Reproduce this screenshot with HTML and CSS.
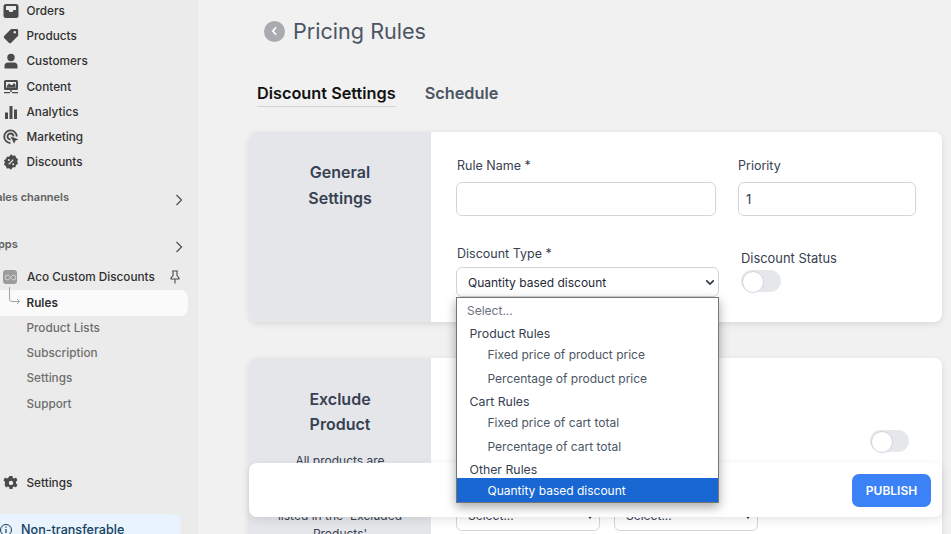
FILE: index.html
```html
<!DOCTYPE html>
<html lang="en">
<head>
<meta charset="utf-8">
<title>Pricing Rules</title>
<link rel="stylesheet" href="styles.css">
</head>
<body>
<div class="app">
  <aside class="sidebar">
    <nav class="nav-main">
      <a class="nav-item"><svg class="ico" viewBox="0 0 16 16"><path fill="#4a4a4a" d="M3 1h10a2.500 2.500 0 0 1 2.500 2.500v9A2.500 2.500 0 0 1 13 15H3a2.500 2.500 0 0 1-2.500-2.500v-9A2.500 2.500 0 0 1 3 1Z"/><path fill="#ebebeb" d="M3.500 3h9a.5.5 0 0 1 .5.500V7h-2.500l-1 2h-3l-1-2H3V3.500a.5.5 0 0 1 .5-.5Z"/></svg>Orders</a>
      <a class="nav-item"><svg class="ico" viewBox="0 0 16 16"><path fill="#4a4a4a" d="M9 1h5a1.200 1.200 0 0 1 1.200 1.200V7a1.800 1.800 0 0 1-.5 1.200l-6.500 6.500a1.700 1.700 0 0 1-2.400 0l-4.500-4.500a1.700 1.700 0 0 1 0-2.400l6.500-6.500A1.800 1.800 0 0 1 9 1Z"/><circle cx="11.800" cy="4.300" r="1.200" fill="#ebebeb"/></svg>Products</a>
      <a class="nav-item"><svg class="ico" viewBox="0 0 16 16"><circle cx="8" cy="4.500" r="3.700" fill="#4a4a4a"/><path fill="#4a4a4a" d="M1.500 15.500v-2.500A3.500 3.500 0 0 1 5 9.500h6a3.500 3.500 0 0 1 3.500 3.500v2.500Z"/></svg>Customers</a>
      <a class="nav-item"><svg class="ico" viewBox="0 0 16 16"><rect x="1" y="1" width="14" height="10" rx="1.500" fill="#4a4a4a"/><path fill="#ebebeb" d="M3 3h10v5.500H3Z"/><path fill="#4a4a4a" d="M4 6.500L6 4.500l2 1.500h1.500L11 4l1.500 1.500V8.500H4Z"/><path fill="#4a4a4a" d="M7.300 11h1.400v2h-1.400ZM1 13h6v1.300H1ZM9 13h6v1.300H9Z"/></svg>Content</a>
      <a class="nav-item"><svg class="ico" viewBox="0 0 16 16"><path fill="#4a4a4a" d="M2 8.500h3V15H2ZM6.500 2h3v13h-3ZM11 5.500h3V15h-3Z"/></svg>Analytics</a>
      <a class="nav-item"><svg class="ico" viewBox="0 0 16 16"><path fill="none" stroke="#4a4a4a" stroke-width="1.800" d="M7.500 14A6.300 6.300 0 1 1 13.800 7.500"/><path fill="none" stroke="#4a4a4a" stroke-width="1.800" d="M7.500 10.500a3 3 0 1 1 3-3"/><path fill="#4a4a4a" d="M7.500 7.500l8 2.700-3 1.300-1.300 3.200Z"/></svg>Marketing</a>
      <a class="nav-item"><svg class="ico" viewBox="0 0 16 16"><path fill="#4a4a4a" d="M8 .3l1.900 1.400 2.400-.1.700 2.200 2 1.400-.8 2.300.8 2.200-2 1.400-.7 2.200-2.400-.1L8 15.700l-1.900-1.400-2.400.1-.7-2.200-2-1.400.8-2.200-.8-2.300 2-1.400.7-2.200 2.400.1Z"/><path stroke="#ebebeb" stroke-width="1.300" d="M10.300 5.600l-4.600 4.800"/><circle cx="5.800" cy="6" r="1" fill="#ebebeb"/><circle cx="10.200" cy="10.200" r="1" fill="#ebebeb"/></svg>Discounts</a>
    </nav>
    <div class="section-head first"><span>Sales channels</span><svg class="chev" viewBox="0 0 8 12"><path d="M1.500 1l5 5-5 5" fill="none" stroke="#4d4d4d" stroke-width="1.200"/></svg></div>
    <div class="section-head second"><span>Apps</span><svg class="chev" viewBox="0 0 8 12"><path d="M1.500 1l5 5-5 5" fill="none" stroke="#4d4d4d" stroke-width="1.200"/></svg></div>
    <div class="app-row">
      <span class="app-logo"><svg viewBox="0 0 14 8" width="11" height="7"><path fill="none" stroke="#e8e8e8" stroke-width="1" d="M7 4C5.500 2 4.500 1 3.200 1a3 3 0 0 0 0 6C4.500 7 5.500 6 7 4c1.500-2 2.500-3 3.800-3a3 3 0 0 1 0 6C9.500 7 8.500 6 7 4Z"/></svg></span>
      <span class="app-name">Aco Custom Discounts</span>
      <svg class="pin" viewBox="0 0 12 14"><path fill="none" stroke="#4a4a4a" stroke-width="1.100" d="M3.200 1h5.600M4 1v4.500L2 8v1h8V8L8 5.500V1M6 9v4.500"/></svg>
    </div>
    <div class="subnav">
      <svg class="elbow" viewBox="0 0 14 22"><path fill="none" stroke="#a3a3a3" d="M1.500 0v12a2.500 2.500 0 0 0 2.500 2.500h7.500M9 12l2.500 2.500L9 17"/></svg>
      <a class="sub-item active">Rules</a>
      <a class="sub-item">Product Lists</a>
      <a class="sub-item">Subscription</a>
      <a class="sub-item">Settings</a>
      <a class="sub-item">Support</a>
    </div>
    <a class="nav-item settings"><svg class="ico" viewBox="0 0 16 16"><path fill="#4a4a4a" fill-rule="evenodd" d="M6.500 1h3l.4 2 1.300.6 1.800-1 1.500 2.600-1.500 1.400v1.800l1.500 1.300-1.500 2.700-1.800-1-1.300.6-.4 2h-3l-.4-2-1.300-.6-1.800 1-1.500-2.700L2 8.700V6.900L.5 5.200 2 2.600l1.800 1 1.300-.6ZM8 5.700a2.200 2.200 0 1 0 0 4.400A2.200 2.200 0 0 0 8 5.700Z"/></svg>Settings</a>
    <div class="notice"><svg class="info" viewBox="0 0 14 14"><circle cx="6" cy="7" r="5.500" fill="none" stroke="#16405f" stroke-width="1"/><path stroke="#16405f" stroke-width="1.200" d="M6 6v4M6 3.500v1.300"/></svg><span>Non-transferable</span></div>
  </aside>

  <main class="main">
    <header class="page-head">
      <span class="back"><svg viewBox="0 0 8 12" width="7" height="10"><path d="M6 1.500L2 6l4 4.500" fill="none" stroke="#fff" stroke-width="2"/></svg></span>
      <h1>Pricing Rules</h1>
    </header>
    <div class="tabs">
      <span class="tab active">Discount Settings</span>
      <span class="tab">Schedule</span>
    </div>

    <section class="card general">
      <div class="card-side"><h2>General<br>Settings</h2></div>
      <div class="card-body form-grid">
        <div class="field name"><label>Rule Name *</label><div class="input"></div></div>
        <div class="field priority"><label>Priority</label><div class="input">1</div></div>
        <div class="field type"><label>Discount Type *</label>
          <div class="select-box">Quantity based discount<svg class="caret" viewBox="0 0 12 8"><path d="M1.500 1.500L6 6l4.500-4.500" fill="none" stroke="#2f3640" stroke-width="2"/></svg></div>
        </div>
        <div class="field status"><label>Discount Status</label><span class="toggle"></span></div>
      </div>
    </section>

    <section class="card exclude">
      <div class="card-side"><h2>Exclude<br>Product</h2><p>All products are<br>eligible for the rule<br>except those which are<br>listed in the 'Excluded<br>Products'</p></div>
      <div class="card-body exclude-body">
        <span class="toggle"></span>
        <div class="mini-selects">
          <div class="mini-select">Select...<i></i></div>
          <div class="mini-select">Select...<i></i></div>
        </div>
      </div>
    </section>

    <div class="publish-bar"><button class="publish">PUBLISH</button></div>

    <ul class="dropdown">
      <li class="opt placeholder">Select...</li>
      <li class="group">Product Rules</li>
      <li class="opt">Fixed price of product price</li>
      <li class="opt">Percentage of product price</li>
      <li class="group">Cart Rules</li>
      <li class="opt">Fixed price of cart total</li>
      <li class="opt">Percentage of cart total</li>
      <li class="group">Other Rules</li>
      <li class="opt selected">Quantity based discount</li>
    </ul>
  </main>
</div>
</body>
</html>
```
FILE: styles.css
```css
* { box-sizing: border-box; }
html, body { margin: 0; height: 534px; overflow: hidden; }
body { font-family: Inter, "Liberation Sans", sans-serif; color: #374151; background: #f1f1f1; }
.app { display: flex; height: 534px; overflow: hidden; }

.sidebar { width: 198px; flex: none; height: 534px; background: #ebebeb; overflow: hidden; display: flex; flex-direction: column; }
.nav-main { display: flex; flex-direction: column; margin-top: -1.5px; }
.nav-item { display: flex; align-items: center; flex: none; height: 25.2px; padding-left: 3px; font-size: 11.75px; font-weight: 500; color: #303030; white-space: nowrap; }
.ico { width: 16px; height: 16px; margin-right: 7.5px; flex: none; }
.section-head { display: flex; justify-content: space-between; align-items: center; flex: none; font-size: 11px; font-weight: 600; color: #616161; margin-left: -11px; padding-right: 15px; height: 18px; }
.section-head.first { margin-top: 13.5px; }
.section-head.second { margin-top: 29px; margin-left: -10px; }
.chev { width: 8px; height: 12px; margin-top: 5px; }
.app-row { display: flex; align-items: center; flex: none; height: 20px; margin-top: 14px; padding-left: 3px; font-size: 11.75px; font-weight: 500; color: #303030; white-space: nowrap; }
.app-logo { width: 14px; height: 14px; background: #9b9b9b; border-radius: 3px; margin-right: 10px; display: flex; align-items: center; justify-content: center; flex: none; }
.app-name { width: 142px; }
.pin { width: 12px; height: 14px; }
.subnav { position: relative; display: flex; flex-direction: column; flex: none; }
.elbow { position: absolute; left: 8px; top: 0; width: 14px; height: 22px; z-index: 1; }
.sub-item { display: flex; align-items: center; height: 25.2px; padding-left: 26.5px; font-size: 11.75px; font-weight: 500; color: #6e6e6e; white-space: nowrap; width: 188px; }
.sub-item.active { color: #303030; font-weight: 600; background: #fafafa; border-radius: 0 8px 8px 0; margin-top: 3px; }
.nav-item.settings { margin-top: 54.6px; }
.notice { display: flex; align-items: center; width: 181px; height: 31px; margin-top: 18px; background: #e8f3fd; border-radius: 0 8px 0 0; font-size: 12.6px; font-weight: 500; color: #16405f; white-space: nowrap; flex: none; }
.info { width: 14px; height: 14px; margin-right: 7px; flex: none; }

.main { position: relative; flex: 1; min-width: 0; padding: 0 9px 0 51px; }
.page-head { display: flex; align-items: center; gap: 8px; height: 30px; margin: 16px 0 0 15px; }
.back { width: 21px; height: 21px; border-radius: 50%; background: #a9abb0; display: flex; align-items: center; justify-content: center; }
h1 { margin: 0; font-size: 21.6px; font-weight: 400; color: #4b5563; }
.tabs { display: flex; gap: 29px; margin: 35px 0 0 8px; height: 26px; }
.tab { font-size: 16.3px; font-weight: 600; color: #4b5563; height: 26px; line-height: 25px; }
.tab.active { color: #111; border-bottom: 1px solid #d1d5db; }

.card { display: flex; background: #fff; border-radius: 8px; box-shadow: 0 2px 6px rgba(0, 0, 0, .1); overflow: hidden; }
.card.general { height: 190px; margin-top: 25px; }
.card.exclude { height: 300px; margin-top: 36px; }
.card-side { width: 182px; flex: none; background: #e5e6ea; text-align: center; padding: 27px 15px 0; color: #374151; }
h2 { margin: 0; font-size: 16px; font-weight: 600; line-height: 26px; color: #374151; }
.exclude .card-side { padding-top: 29px; }
.exclude h2 { line-height: 25px; }
.card-side p { margin: 15px 0 0; font-size: 12px; line-height: 18.3px; color: #374151; white-space: nowrap; }

.card-body { flex: 1; min-width: 0; position: relative; }
.form-grid { display: grid; grid-template-columns: 262px 178px; column-gap: 20px; grid-template-rows: 88px 1fr; padding: 24px 0 0 25px; }
.field label { display: block; font-size: 12.5px; font-weight: 400; color: #374151; line-height: 20px; }
.name label, .type label { padding-left: 1px; }
.input { height: 34px; margin-top: 6px; border: 1px solid #d1d5db; border-radius: 6px; width: 260px; padding-left: 7px; font-size: 13px; line-height: 32px; }
.priority .input { width: 178px; }
.select-box { display: flex; align-items: center; justify-content: space-between; width: 263px; height: 30px; margin-top: 3px; border: 1px solid #d1d5db; border-radius: 6px; padding: 0 3px 0 11px; font-size: 12px; color: #1f2937; }
.caret { width: 10px; height: 7px; }
.status { padding-left: 3px; margin-top: 5px; }
.status label { margin-bottom: 1px; font-size: 12.9px; }
.toggle { display: block; width: 40px; height: 22px; border-radius: 11px; background: #e5e7eb; position: relative; }
.toggle::after { content: ""; position: absolute; left: 1px; top: 1px; width: 20px; height: 20px; border-radius: 50%; background: #fff; border: 1px solid #d1d5db; }
.exclude-body { padding: 72px 33px 0 25px; display: flex; flex-direction: column; }
.exclude-body .toggle { align-self: flex-end; width: 39px; }
.mini-selects { display: flex; gap: 14px; margin-top: 48px; }
.mini-select { position: relative; width: 144px; height: 31px; border: 1px solid #d1d5db; border-radius: 6px; padding: 0 0 0 11px; font-size: 12px; line-height: 30px; }
.mini-select i { position: absolute; right: 6px; top: 14px; border: 3px solid transparent; border-top: 4px solid #333; }

.publish-bar { position: absolute; left: 51px; top: 463px; width: 693px; height: 54px; background: #fff; border-radius: 8px; box-shadow: 0 3px 10px rgba(0, 0, 0, .1); display: flex; justify-content: flex-end; align-items: center; padding-right: 11px; }
.publish { width: 79px; height: 33px; border: 0; border-radius: 7px; background: #3b82f6; color: #fff; font: 600 12px Inter, "Liberation Sans", sans-serif; }

.dropdown { position: absolute; left: 258px; top: 297px; width: 263px; height: 206px; margin: 0; padding: 2px 0 0; list-style: none; background: #fff; border: 1px solid #767676; box-shadow: 0 4px 10px rgba(0, 0, 0, .35); font-size: 12px; }
.dropdown li { white-space: nowrap; }
.opt { height: 24px; line-height: 26px; padding-left: 30.5px; color: #4b5563; }
.group { height: 20px; line-height: 24px; padding-left: 12.5px; font-size: 12.3px; color: #374151; }
.opt.placeholder { padding-left: 10px; color: #6b7280; height: 22px; line-height: 22px; }
.opt.selected { background: #1967d2; color: #fff; }
```
